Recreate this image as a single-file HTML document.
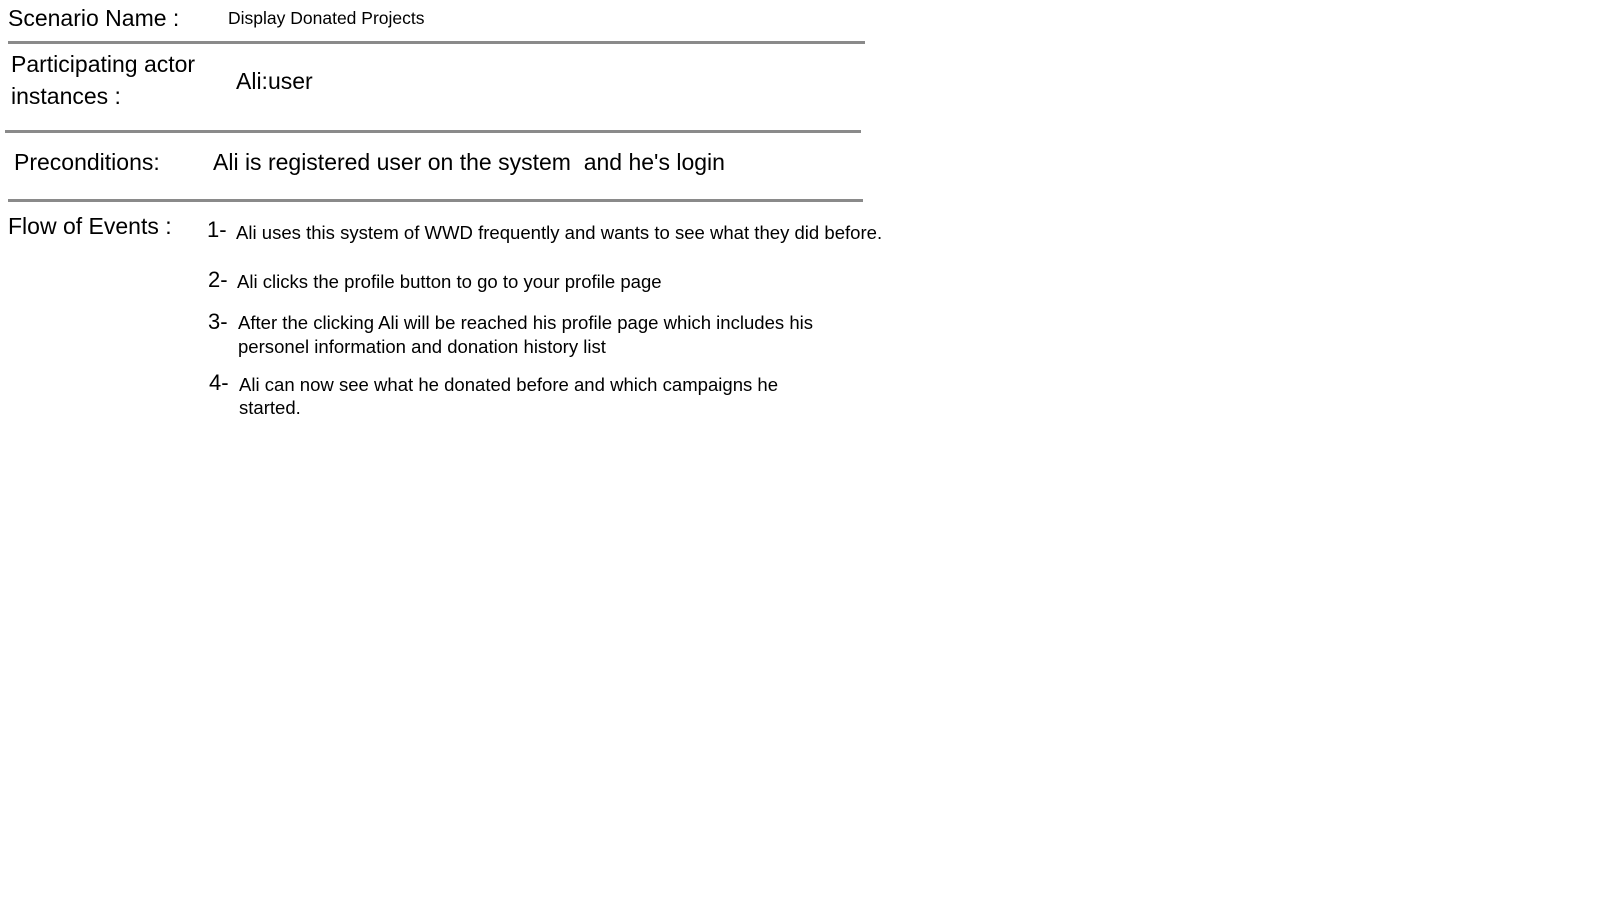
<!DOCTYPE html>
<html><head><meta charset="utf-8"><style>
body{margin:0;width:1607px;height:898px;background:#fff;font-family:"Liberation Sans",sans-serif;color:#000;position:relative;overflow:hidden}
.t{position:absolute;white-space:nowrap;line-height:1;transform-origin:0 0}
.l{position:absolute;height:3px;background:#8a8a8a}
</style></head><body>
<div class="t" style="left:8px;top:7px;font-size:23px">Scenario Name :</div>
<div class="t" style="left:228px;top:10px;font-size:17.5px">Display Donated Projects</div>
<div class="l" style="left:8px;top:41px;width:857px"></div>
<div class="t" style="left:11px;top:53px;font-size:23px">Participating actor</div>
<div class="t" style="left:11px;top:85px;font-size:23px">instances :</div>
<div class="t" style="left:236px;top:70px;font-size:23px">Ali:user</div>
<div class="l" style="left:5px;top:130px;width:856px"></div>
<div class="t" style="left:14px;top:151px;font-size:23px">Preconditions:</div>
<div class="t" style="left:213px;top:151px;font-size:23px">Ali is registered user on the system&nbsp; and he's login</div>
<div class="l" style="left:8px;top:199px;width:855px"></div>
<div class="t" style="left:8px;top:215px;font-size:23px">Flow of Events :</div>
<div class="t" style="left:207px;top:219px;font-size:22px">1-</div>
<div class="t" style="left:236px;top:224px;font-size:18px;transform:scaleX(1.03)">Ali uses this system of WWD frequently and wants to see what they did before.</div>
<div class="t" style="left:208px;top:269px;font-size:22px">2-</div>
<div class="t" style="left:237px;top:273px;font-size:18px;transform:scaleX(1.03)">Ali clicks the profile button to go to your profile page</div>
<div class="t" style="left:208px;top:311px;font-size:22px">3-</div>
<div class="t" style="left:238px;top:314px;font-size:18px;transform:scaleX(1.03)">After the clicking Ali will be reached his profile page which includes his</div>
<div class="t" style="left:238px;top:338px;font-size:18px;transform:scaleX(1.03)">personel information and donation history list</div>
<div class="t" style="left:209px;top:372px;font-size:22px">4-</div>
<div class="t" style="left:239px;top:376px;font-size:18px;transform:scaleX(1.03)">Ali can now see what he donated before and which campaigns he</div>
<div class="t" style="left:239px;top:399px;font-size:18px;transform:scaleX(1.03)">started.</div>
</body></html>
